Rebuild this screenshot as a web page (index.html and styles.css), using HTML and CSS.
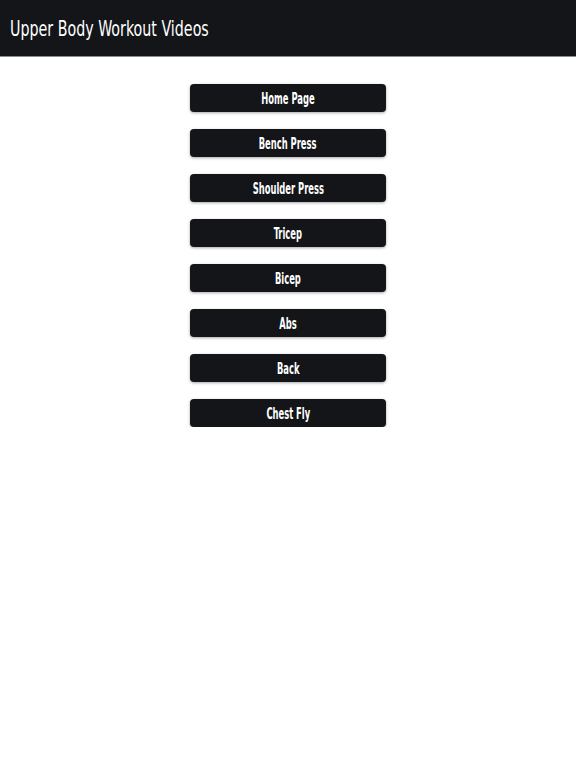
FILE: index.html
```html
<!DOCTYPE html>
<html lang="en">
<head>
<meta charset="utf-8">
<title>Upper Body Workout Videos</title>
<link rel="stylesheet" href="styles.css">
</head>
<body>
<header class="topbar">
  <h1 class="title"><span class="narrow">Upper Body Workout Videos</span></h1>
</header>
<nav class="menu">
  <a class="btn" href="#"><span class="label">Home Page</span></a>
  <a class="btn" href="#"><span class="label">Bench Press</span></a>
  <a class="btn" href="#"><span class="label">Shoulder Press</span></a>
  <a class="btn" href="#"><span class="label">Tricep</span></a>
  <a class="btn" href="#"><span class="label">Bicep</span></a>
  <a class="btn" href="#"><span class="label">Abs</span></a>
  <a class="btn" href="#"><span class="label">Back</span></a>
  <a class="btn" href="#"><span class="label">Chest Fly</span></a>
</nav>
</body>
</html>
```

FILE: styles.css
```css
html, body {
  margin: 0;
  padding: 0;
  background: #ffffff;
}
body {
  font-family: "DejaVu Sans Condensed", "Liberation Sans", sans-serif;
}
.topbar {
  height: 57px;
  background: #131518;
  border-bottom: 1px solid #8a8c8e;
  box-sizing: border-box;
  display: flex;
  align-items: center;
  padding: 2px 10px 0;
}
.title {
  margin: 0;
  color: #ffffff;
  font-size: 22px;
  font-weight: 400;
  line-height: 1;
}
.narrow {
  display: inline-block;
  transform: scaleX(0.72);
  transform-origin: left center;
  white-space: nowrap;
}
.menu {
  display: flex;
  flex-direction: column;
  align-items: center;
  gap: 17px;
  padding-top: 27px;
}
.btn {
  display: flex;
  align-items: center;
  justify-content: center;
  box-sizing: border-box;
  width: 196px;
  height: 28px;
  padding-top: 2px;
  background: #131518;
  color: #ffffff;
  text-decoration: none;
  font-size: 15px;
  font-weight: 700;
  border-radius: 4px;
  box-shadow: 0 1px 3px rgba(0, 0, 0, 0.35);
}
.label {
  display: inline-block;
  transform: scaleX(0.62);
  transform-origin: center center;
  white-space: nowrap;
}
```
